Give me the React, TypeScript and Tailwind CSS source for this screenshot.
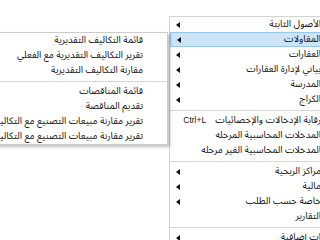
import React from 'react';

type Item = { t?: string; arrow?: boolean; active?: boolean; shortcut?: string; sep?: boolean };

const mainItems: Item[] = [
  { t: 'الأصول الثابتة', arrow: true },
  { t: 'المقاولات', arrow: true, active: true },
  { t: 'العقارات', arrow: true },
  { t: 'بياني لإدارة العقارات', arrow: true },
  { t: 'المدرسة', arrow: true },
  { t: 'الكراج', arrow: true },
  { sep: true },
  { t: 'رقابة الإدخالات والإحصائيات', shortcut: 'Ctrl+L' },
  { t: 'المدخلات المحاسبية المرحله' },
  { t: 'المدخلات المحاسبية الغير مرحله' },
  { sep: true },
  { t: 'مراكز الربحية', arrow: true },
  { t: 'مالية', arrow: true },
  { t: 'خاصة حسب الطلب', arrow: true },
  { t: 'التقارير' },
  { sep: true },
  { t: 'ات إضافية', arrow: true },
];

const subItems: Item[] = [
  { t: 'قائمة التكاليف التقديرية' },
  { t: 'تقرير التكاليف التقديرية مع الفعلي' },
  { t: 'مقارنة التكاليف التقديرية' },
  { sep: true },
  { t: 'قائمة المناقصات' },
  { t: 'تقديم المناقصة' },
  { t: 'تقرير مقارنة مبيعات التصنيع مع التكاليف التقديرية' },
  { t: 'تقرير مقارنة مبيعات التصنيع مع التكاليف الفعلية' },
];

const Arrow = () => (
  <svg width="4" height="6" viewBox="0 0 4 6">
    <polygon points="0,3 4,0 4,6" fill="#111" />
  </svg>
);

export default function App() {
  return (
    <div className="relative w-[320px] h-[240px] overflow-hidden bg-white text-[9.5px] text-[#111] font-['Noto_Sans_Arabic',sans-serif]">
      {/* main menu */}
      <div className="absolute left-[169px] top-[16px] w-[160px] bg-white border-t border-l border-[#d4d4d4]">
        {mainItems.map((it, i) =>
          it.sep ? (
            <div key={i} className="h-[6px] flex items-center">
              <div className="h-px w-full bg-[#d7d7d7]" />
            </div>
          ) : (
            <div
              key={i}
              className={
                'h-[15px] flex items-center pr-[8px] ' +
                (it.active ? 'bg-[#cce4f7] border-y border-l border-[#99c8ee]' : '')
              }
            >
              <div className="w-[16px] pl-[6px] flex items-center">{it.arrow ? <Arrow /> : null}</div>
              <div className="w-[44px] text-[8.5px] font-['Liberation_Sans',sans-serif]">{it.shortcut}</div>
              <div dir="rtl" className="flex-1 text-right whitespace-nowrap leading-none">
                {it.t}
              </div>
            </div>
          )
        )}
      </div>

      {/* submenu */}
      <div className="absolute left-[-80px] top-[32px] w-[248px] bg-white border border-[#cccccc] shadow-[2px_2px_3px_rgba(0,0,0,0.25)]">
        {subItems.map((it, i) =>
          it.sep ? (
            <div key={i} className="h-[6px] flex items-center">
              <div className="h-px w-full bg-[#d7d7d7]" />
            </div>
          ) : (
            <div key={i} dir="rtl" className="h-[15px] flex items-center pr-[24px] whitespace-nowrap leading-none">
              {it.t}
            </div>
          )
        )}
      </div>
    </div>
  );
}
